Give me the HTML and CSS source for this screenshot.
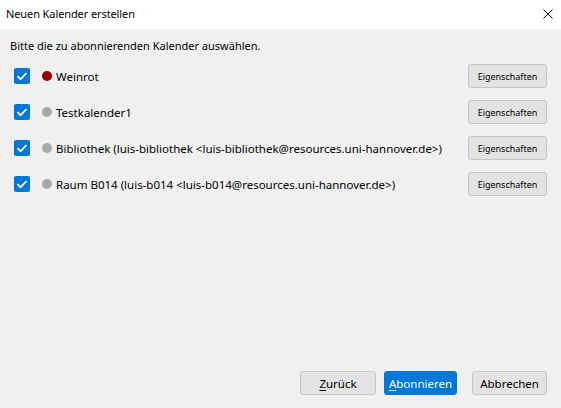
FILE: index.html
```html
<!DOCTYPE html>
<html lang="de">
<head>
<meta charset="utf-8">
<title>Neuen Kalender erstellen</title>
<link rel="stylesheet" href="styles.css">
</head>
<body>
<div class="window">
  <div class="titlebar">
    <span class="title">Neuen Kalender erstellen</span>
    <span class="close" aria-label="Schließen">
      <svg width="10" height="10" viewBox="0 0 10 10"><path d="M0.5 0.5 L9.5 9.5 M9.5 0.5 L0.5 9.5" stroke="#000" stroke-width="1" fill="none"/></svg>
    </span>
  </div>
  <div class="content">
    <div class="intro">Bitte die zu abonnierenden Kalender auswählen.</div>
    <ul class="cal-list">
      <li class="cal-row">
        <span class="check"><svg width="16" height="16" viewBox="0 0 16 16"><path d="M3.5 8.2 L6.6 11.2 L12.6 5" stroke="#fff" stroke-width="1.7" fill="none"/></svg></span>
        <span class="dot dot-red"></span>
        <span class="name">Weinrot</span>
        <button class="props">Eigenschaften</button>
      </li>
      <li class="cal-row">
        <span class="check"><svg width="16" height="16" viewBox="0 0 16 16"><path d="M3.5 8.2 L6.6 11.2 L12.6 5" stroke="#fff" stroke-width="1.7" fill="none"/></svg></span>
        <span class="dot"></span>
        <span class="name">Testkalender1</span>
        <button class="props">Eigenschaften</button>
      </li>
      <li class="cal-row">
        <span class="check"><svg width="16" height="16" viewBox="0 0 16 16"><path d="M3.5 8.2 L6.6 11.2 L12.6 5" stroke="#fff" stroke-width="1.7" fill="none"/></svg></span>
        <span class="dot"></span>
        <span class="name">Bibliothek (luis-bibliothek &lt;luis-bibliothek@resources.uni-hannover.de&gt;)</span>
        <button class="props">Eigenschaften</button>
      </li>
      <li class="cal-row">
        <span class="check"><svg width="16" height="16" viewBox="0 0 16 16"><path d="M3.5 8.2 L6.6 11.2 L12.6 5" stroke="#fff" stroke-width="1.7" fill="none"/></svg></span>
        <span class="dot"></span>
        <span class="name">Raum B014 (luis-b014 &lt;luis-b014@resources.uni-hannover.de&gt;)</span>
        <button class="props">Eigenschaften</button>
      </li>
    </ul>
  </div>
  <div class="footer">
    <button class="btn btn-back"><u>Z</u>urück</button>
    <button class="btn btn-primary"><u>A</u>bonnieren</button>
    <button class="btn btn-cancel">Abbrechen</button>
  </div>
</div>
</body>
</html>
```
FILE: styles.css
```css
html, body {
  margin: 0;
  padding: 0;
  width: 561px;
  height: 408px;
  overflow: hidden;
}
body {
  font-family: "Noto Sans", "Open Sans", sans-serif;
  font-size: 11px;
  color: #000;
  background: #f0f0f0;
}
.window {
  display: flex;
  flex-direction: column;
  height: 408px;
}
.titlebar {
  height: 29px;
  background: #fff;
  display: flex;
  align-items: center;
  justify-content: space-between;
  padding: 0 8px 2px 6px;
  box-sizing: border-box;
}
.title {
  font-size: 11px;
  letter-spacing: -0.1px;
}
.close {
  display: flex;
  width: 10px;
  height: 10px;
}
.content {
  flex: 1;
  padding: 9px 14px 0 10px;
}
.intro {
  height: 16px;
  line-height: 16px;
  font-size: 11px;
}
.cal-list {
  list-style: none;
  margin: 4px 0 0;
  padding: 0;
}
.cal-row {
  height: 36px;
  display: flex;
  align-items: center;
  padding-left: 4px;
}
.check {
  width: 16px;
  height: 16px;
  border-radius: 2px;
  background: #0078d7;
  display: flex;
}
.dot {
  width: 10px;
  height: 10px;
  border-radius: 50%;
  background: #a9a9a9;
  margin-left: 12px;
}
.dot-red {
  background: #9b0000;
}
.name {
  margin-left: 4px;
  flex: 1;
  white-space: nowrap;
  font-size: 11.5px;
}
.props {
  width: 79px;
  height: 24px;
  font-family: inherit;
  font-size: 9px;
  color: #000;
  background: #e3e3e3;
  border: 1px solid #c6c6c6;
  border-radius: 3px;
  padding: 0;
}
.footer {
  display: flex;
  justify-content: flex-end;
  padding: 0 14px 13px 0;
}
.btn {
  height: 24px;
  font-family: inherit;
  font-size: 11.5px;
  color: #000;
  background: #e3e3e3;
  border: 1px solid #c6c6c6;
  border-radius: 3px;
  padding: 0;
}
.btn-back {
  width: 76px;
}
.btn-primary {
  width: 73px;
  margin-left: 8px;
  background: #0078d7;
  border-color: #0078d7;
  color: #fff;
}
.btn-cancel {
  width: 75px;
  margin-left: 15px;
}
.btn u {
  text-underline-offset: 2px;
}
```
